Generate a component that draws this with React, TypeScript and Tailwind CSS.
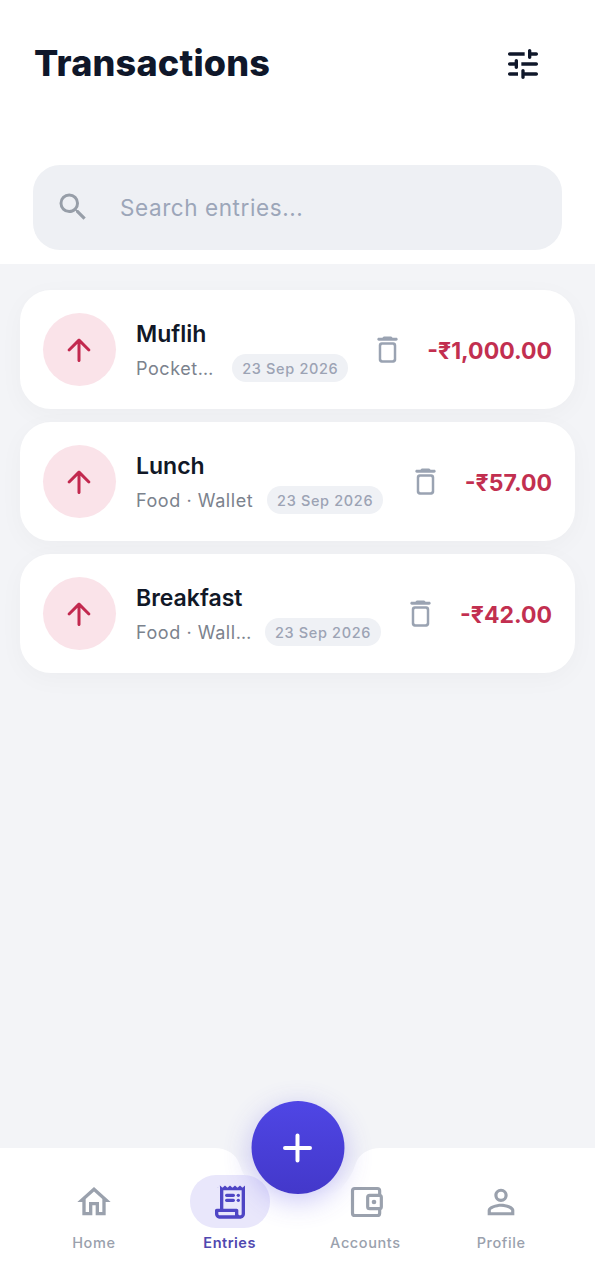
// src/App.tsx
import { MdOutlineHome, MdPersonOutline, MdSearch } from "react-icons/md";

type Entry = {
  id: number;
  title: string;
  note: string;
  clipped?: boolean; // shortened notes take up the whole row
  date: string;
  amount: string;
};

const entries: Entry[] = [
  { id: 1, title: "Muflih", note: "Pocket…", clipped: true, date: "23 Sep 2026", amount: "-₹1,000.00" },
  { id: 2, title: "Lunch", note: "Food · Wallet", date: "23 Sep 2026", amount: "-₹57.00" },
  { id: 3, title: "Breakfast", note: "Food · Wall…", clipped: true, date: "23 Sep 2026", amount: "-₹42.00" },
];

function TuneIcon() {
  return (
    <svg viewBox="0 0 24 24" className="size-10" fill="currentColor">
      <path d="M3 18c0 .55.45 1 1 1h5v-2H4c-.55 0-1 .45-1 1zM3 6c0 .55.45 1 1 1h9V5H4c-.55 0-1 .45-1 1zm10 14v-1h7c.55 0 1-.45 1-1s-.45-1-1-1h-7v-1c0-.55-.45-1-1-1s-1 .45-1 1v4c0 .55.45 1 1 1s1-.45 1-1zM7 10v1H4c-.55 0-1 .45-1 1s.45 1 1 1h3v1c0 .55.45 1 1 1s1-.45 1-1v-4c0-.55-.45-1-1-1s-1 .45-1 1zm14 2c0-.55-.45-1-1-1h-9v2h9c.55 0 1-.45 1-1zm-5-3c.55 0 1-.45 1-1V7h3c.55 0 1-.45 1-1s-.45-1-1-1h-3V4c0-.55-.45-1-1-1s-1 .45-1 1v4c0 .55.45 1 1 1z" />
    </svg>
  );
}

function ArrowUpIcon() {
  return (
    <svg viewBox="0 0 24 24" className="size-9" fill="currentColor">
      <path d="M13 19V7.83l4.88 4.88c.39.39 1.03.39 1.42 0 .39-.39.39-1.02 0-1.41l-6.59-6.59c-.39-.39-1.02-.39-1.41 0l-6.6 6.58c-.39.39-.39 1.02 0 1.41.39.39 1.02.39 1.41 0L11 7.83V19c0 .55.45 1 1 1s1-.45 1-1z" />
    </svg>
  );
}

function TrashIcon() {
  return (
    <svg viewBox="0 0 24 24" className="size-[35px]" fill="currentColor">
      <path d="M6 19c0 1.1.9 2 2 2h8c1.1 0 2-.9 2-2V9c0-1.1-.9-2-2-2H8c-1.1 0-2 .9-2 2v10zM8.6 8.7h6.8c.5 0 .9.4.9.9v8.8c0 .5-.4.9-.9.9H8.6c-.5 0-.9-.4-.9-.9V9.6c0-.5.4-.9.9-.9zM15.5 4l-.71-.71c-.18-.18-.44-.29-.7-.29H9.91c-.26 0-.52.11-.7.29L8.5 4H6c-.55 0-1 .45-1 1s.45 1 1 1h12c.55 0 1-.45 1-1s-.45-1-1-1h-2.5z" />
    </svg>
  );
}

function ReceiptIcon() {
  return (
    <svg viewBox="0 0 24 24" className="size-10" fill="currentColor">
      <path d="M20.65 2.35l-.8.8c-.2.2-.51.2-.71 0l-.79-.8c-.2-.2-.51-.2-.71 0l-.79.8c-.2.2-.51.2-.71 0l-.79-.8c-.2-.2-.51-.2-.71 0l-.79.8c-.2.2-.51.2-.71 0l-.79-.8c-.2-.2-.51-.2-.71 0l-.79.8c-.2.2-.51.2-.71 0l-.79-.8c-.2-.2-.51-.2-.71 0l-.79.8c-.2.2-.51.2-.71 0l-.79-.8c-.2-.2-.51-.2-.71 0l-.79.8c-.1.1-.23.15-.36.15L6 2.2V16H4c-.55 0-1 .45-1 1v2c0 1.66 1.34 3 3 3h12c1.66 0 3-1.34 3-3V2.5c0-.18-.2-.3-.35-.15zM15 20H6c-.55 0-1-.45-1-1v-1h10v2zm4-1c0 .55-.45 1-1 1s-1-.45-1-1v-2c0-.55-.45-1-1-1H8V5h11v14z" />
      <rect x="9" y="7" width="6" height="2" rx="1" />
      <rect x="9" y="10" width="6" height="2" rx="1" />
      <circle cx="17" cy="8" r="1" />
      <circle cx="17" cy="11" r="1" />
    </svg>
  );
}

function WalletIcon() {
  return (
    <svg viewBox="0 0 24 24" className="ml-px size-10" fill="none" stroke="currentColor" strokeWidth="1.9">
      <path d="M20.2 7.7V5.3c0-.8-.6-1.4-1.4-1.4H5.3c-.8 0-1.4.6-1.4 1.4v13.400c0 .8.6 1.400 1.400 1.400h13.500c.8 0 1.400-.6 1.400-1.400v-2.400" />
      <rect x="13" y="8" width="8.2" height="8" rx="1.2" />
      <circle cx="16.8" cy="12" r="1.4" fill="currentColor" stroke="none" />
    </svg>
  );
}

function EntryCard({ entry }: { entry: Entry }) {
  return (
    <li className="flex h-[119px] items-center rounded-[31px] bg-white px-[23px] shadow-[0_6px_26px_rgba(15,23,42,0.03)]">
      <div className="grid size-[73px] shrink-0 place-items-center rounded-full bg-[#fae3e9] pr-px text-[#c2294f]">
        <ArrowUpIcon />
      </div>
      <div className="mr-[22px] ml-5 min-w-0 flex-1 pt-[3px]">
        <h2 className="text-[23px] leading-7 font-semibold text-[#111827]">{entry.title}</h2>
        <div className="mt-1.5 flex h-7 items-center gap-3.5">
          <span
            className={
              entry.clipped
                ? "min-w-0 flex-1 pt-px text-[18px] leading-7 tracking-[0.56px] whitespace-nowrap text-[#7b828d]"
                : "pt-px text-[18px] leading-7 tracking-[0.56px] whitespace-nowrap text-[#7b828d]"
            }
          >
            {entry.note}
          </span>
          <span className="flex h-7 w-[116px] shrink-0 items-center justify-center rounded-full bg-[#eff1f5] pt-px text-[14.5px] font-medium tracking-[0.65px] whitespace-nowrap text-[#9ca3b4]">
            {entry.date}
          </span>
        </div>
      </div>
      <button className="mr-[22px] shrink-0 text-[#9aa3b2]" aria-label="Delete">
        <TrashIcon />
      </button>
      <span className="shrink-0 pt-0.5 text-[23px] leading-7 font-bold whitespace-nowrap text-[#c22f50]">
        {entry.amount}
      </span>
    </li>
  );
}

const tabs = [
  { label: "Home", icon: <MdOutlineHome size={40} /> },
  { label: "Entries", icon: <ReceiptIcon />, active: true },
  { label: "Accounts", icon: <WalletIcon /> },
  { label: "Profile", icon: <MdPersonOutline size={40} /> },
];

function BottomNav() {
  return (
    <nav className="relative h-[132px]">
      {/* bar with a notch for the add button, the notch fades to white at its bottom */}
      <svg viewBox="0 0 595 132" className="absolute inset-0 h-full w-full">
        <defs>
          <linearGradient id="notch" x1="0" y1="0" x2="0" y2="1">
            <stop offset="0.1" stopColor="#ffffff" stopOpacity="0" />
            <stop offset="0.75" stopColor="#ffffff" />
          </linearGradient>
        </defs>
        <path fill="#ffffff" d="M0 0H214C228 0 236 7 239 15A61 61 0 0 0 356 15C359 7 367 0 381 0H595V132H0Z" />
        <rect x="214" width="167" height="62" fill="url(#notch)" />
      </svg>
      <ul className="relative flex px-[26px] pt-[27px]">
        {tabs.map((tab) => (
          <li key={tab.label} className="flex flex-1 flex-col items-center">
            <div
              className={
                tab.active
                  ? "grid h-[53px] w-20 place-items-center rounded-[26px] bg-[#e9e7fb] text-[#4f46c5]"
                  : "grid h-[53px] w-20 place-items-center text-[#9aa1ad]"
              }
            >
              {tab.icon}
            </div>
            <span
              className={
                tab.active
                  ? "mt-[5px] text-[14.5px] leading-5 font-semibold tracking-[0.5px] text-[#5048b0]"
                  : "mt-[5px] text-[14.5px] leading-5 font-medium tracking-[0.6px] text-[#9aa1ad]"
              }
            >
              {tab.label}
            </span>
          </li>
        ))}
      </ul>
      <button
        aria-label="Add entry"
        className="absolute top-[-47px] left-1/2 grid size-[93px] -translate-x-1/2 place-items-center rounded-full bg-linear-to-b from-[#4f46e5] to-[#4338ca] shadow-[0_7px_28px_rgba(79,70,229,0.3)]"
      >
        <svg viewBox="0 0 30 30" className="size-[30px]" stroke="#ffffff" strokeWidth="4" strokeLinecap="round">
          <path d="M15 2.5v25M2.5 15h25" />
        </svg>
      </button>
    </nav>
  );
}

export default function App() {
  return (
    <div className="flex h-[1280px] w-[595px] flex-col overflow-hidden bg-[#f3f4f7] font-[Inter,sans-serif]">
      <header className="h-[264px] shrink-0 bg-white px-[33px] pt-[38px]">
        <div className="flex h-[50px] items-center justify-between pr-[19px] pl-px">
          <h1 className="text-[36px] leading-[50px] font-extrabold tracking-[0.2px] text-[#0f172a]">Transactions</h1>
          <button className="pt-px text-[#0f172a]" aria-label="Filter">
            <TuneIcon />
          </button>
        </div>
        <div className="mt-[77px] flex h-[85px] items-center rounded-[27px] bg-[#eef0f4] pl-[22px]">
          <MdSearch size={36} className="mb-px text-[#979ea8]" />
          <span className="ml-[29px] pt-px text-[22.5px] tracking-[0.58px] text-[#9ca6b9]">Search entries...</span>
        </div>
      </header>

      <main className="flex-1 px-5 pt-[26px]">
        <ul className="flex flex-col gap-[13px]">
          {entries.map((entry) => (
            <EntryCard key={entry.id} entry={entry} />
          ))}
        </ul>
      </main>

      <BottomNav />
    </div>
  );
}
